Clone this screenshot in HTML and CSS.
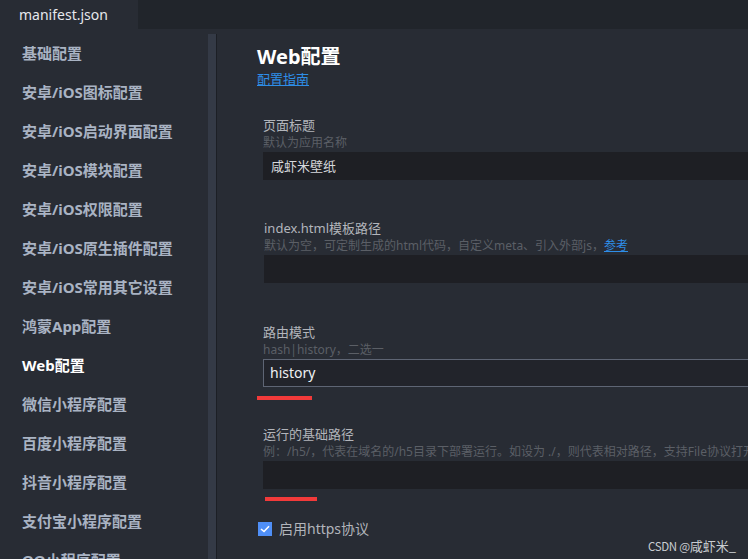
FILE: index.html
```html
<!DOCTYPE html>
<html lang="zh">
<head>
<meta charset="utf-8">
<link rel="stylesheet" href="styles.css">
</head>
<body>
<div class="app">
  <div class="tabbar">
    <div class="tab">manifest.json</div>
  </div>
  <div class="main">
    <nav class="sidebar">
      <div class="nav-item">基础配置</div>
      <div class="nav-item">安卓/iOS图标配置</div>
      <div class="nav-item">安卓/iOS启动界面配置</div>
      <div class="nav-item">安卓/iOS模块配置</div>
      <div class="nav-item">安卓/iOS权限配置</div>
      <div class="nav-item">安卓/iOS原生插件配置</div>
      <div class="nav-item">安卓/iOS常用其它设置</div>
      <div class="nav-item">鸿蒙App配置</div>
      <div class="nav-item active">Web配置</div>
      <div class="nav-item">微信小程序配置</div>
      <div class="nav-item">百度小程序配置</div>
      <div class="nav-item">抖音小程序配置</div>
      <div class="nav-item">支付宝小程序配置</div>
      <div class="nav-item">QQ小程序配置</div>
    </nav>
    <div class="scroll-track"><div class="scroll-thumb"></div></div>
    <section class="content">
      <h1 class="title">Web配置</h1>
      <a class="guide link">配置指南</a>

      <div class="field f1">
        <div class="label">页面标题</div>
        <div class="hint">默认为应用名称</div>
        <div class="input">咸虾米壁纸</div>
      </div>

      <div class="field f2">
        <div class="label">index.html模板路径</div>
        <div class="hint">默认为空，可定制生成的html代码，自定义meta、引入外部js，<a class="link">参考</a></div>
        <div class="input"></div>
      </div>

      <div class="field f3">
        <div class="label">路由模式</div>
        <div class="hint">hash|history，二选一</div>
        <div class="input bordered">history</div>
        <div class="mark mark-a"></div>
      </div>

      <div class="field f4">
        <div class="label">运行的基础路径</div>
        <div class="hint">例：/h5/，代表在域名的/h5目录下部署运行。如设为 ./，则代表相对路径，支持File协议打开</div>
        <div class="input"></div>
        <div class="mark mark-b"></div>
      </div>

      <label class="check">
        <span class="box">
          <svg width="10" height="8" viewBox="0 0 10 8"><path d="M1 4 L4 6.5 L9 1.2" fill="none" stroke="#ffffff" stroke-width="1.6"/></svg>
        </span>
        <span class="check-text">启用https协议</span>
      </label>
    </section>
  </div>
  <div class="watermark"><span class="wm-latin">CSDN @</span>咸虾米_</div>
</div>
</body>
</html>
```

FILE: styles.css
```css
* { box-sizing: border-box; }
html, body {
  margin: 0;
  padding: 0;
  width: 748px;
  height: 559px;
  overflow: hidden;
  background: #282c34;
  font-family: "Noto Sans", "Noto Sans CJK SC", sans-serif;
}
.app {
  position: relative;
  width: 748px;
  height: 559px;
  display: flex;
  flex-direction: column;
  overflow: hidden;
}
.tabbar {
  height: 29px;
  background: #21252b;
  display: flex;
  flex-shrink: 0;
}
.tab {
  width: 138px;
  background: #282c34;
  color: #e6e8ec;
  font-size: 14px;
  line-height: 29px;
  padding-left: 19px;
  padding-bottom: 1px;
}
.main {
  flex: 1;
  display: flex;
  min-height: 0;
}
.sidebar {
  width: 208px;
  flex-shrink: 0;
  padding-top: 5px;
}
.nav-item {
  height: 39px;
  line-height: 39px;
  padding-left: 22px;
  font-size: 15px;
  font-weight: 700;
  color: #a9b3c3;
  white-space: nowrap;
}
.nav-item.active {
  color: #ffffff;
}
.scroll-track {
  width: 9px;
  flex-shrink: 0;
  padding-top: 5px;
}
.scroll-thumb {
  height: 100%;
  background: #343a46;
  border-right: 1px solid #1c1f25;
}
.content {
  flex: 1;
  padding: 15px 0 0 40px;
  overflow: hidden;
  min-width: 0;
}
.title {
  margin: 0;
  font-size: 20px;
  font-weight: 700;
  line-height: 26px;
  color: #ffffff;
}
.link {
  color: #2e8ee8;
  text-decoration: underline;
}
.guide {
  display: block;
  font-size: 13px;
  line-height: 18px;
  width: max-content;
}
.field {
  position: relative;
  margin-left: 6px;
  width: 560px;
}
.f1 { margin-top: 28px; }
.f2 { margin-top: 39px; margin-left: 7px; }
.f3 { margin-top: 40px; }
.f4 { margin-top: 38px; }
.label {
  font-size: 13px;
  line-height: 18px;
  color: #b2b5bb;
  white-space: nowrap;
}
.hint {
  font-size: 12px;
  line-height: 18px;
  color: #5b5f66;
  white-space: nowrap;
}
.hint .link { color: #2e8ee8; }
.input {
  height: 28px;
  background: #1e1f24;
  color: #d6d8dc;
  font-size: 13px;
  line-height: 28px;
  padding-left: 8px;
}
.input.bordered {
  background: #22242b;
  border: 1px solid #5e6574;
  line-height: 26px;
  padding-left: 6px;
  font-size: 14px;
  color: #eef0f3;
}
.mark {
  position: absolute;
  height: 4px;
  background: #f23a3a;
}
.mark-a { left: -6px; bottom: -13px; width: 55px; }
.mark-b { left: 2px; bottom: -12px; width: 52px; }
.check {
  display: flex;
  align-items: center;
  gap: 7px;
  margin-top: 33px;
  margin-left: 1px;
}
.box {
  width: 14px;
  height: 14px;
  background: #4f8ff7;
  display: flex;
  align-items: center;
  justify-content: center;
}
.check-text {
  font-size: 14px;
  line-height: 14px;
  color: #b2b5bb;
}
.watermark {
  position: absolute;
  right: 12px;
  bottom: 4px;
  font-family: "Noto Sans CJK SC", sans-serif;
  font-size: 13px;
  line-height: 18px;
  color: #c9ccd1;
  white-space: nowrap;
}
.wm-latin {
  font-size: 11.5px;
  letter-spacing: -0.3px;
}
```
